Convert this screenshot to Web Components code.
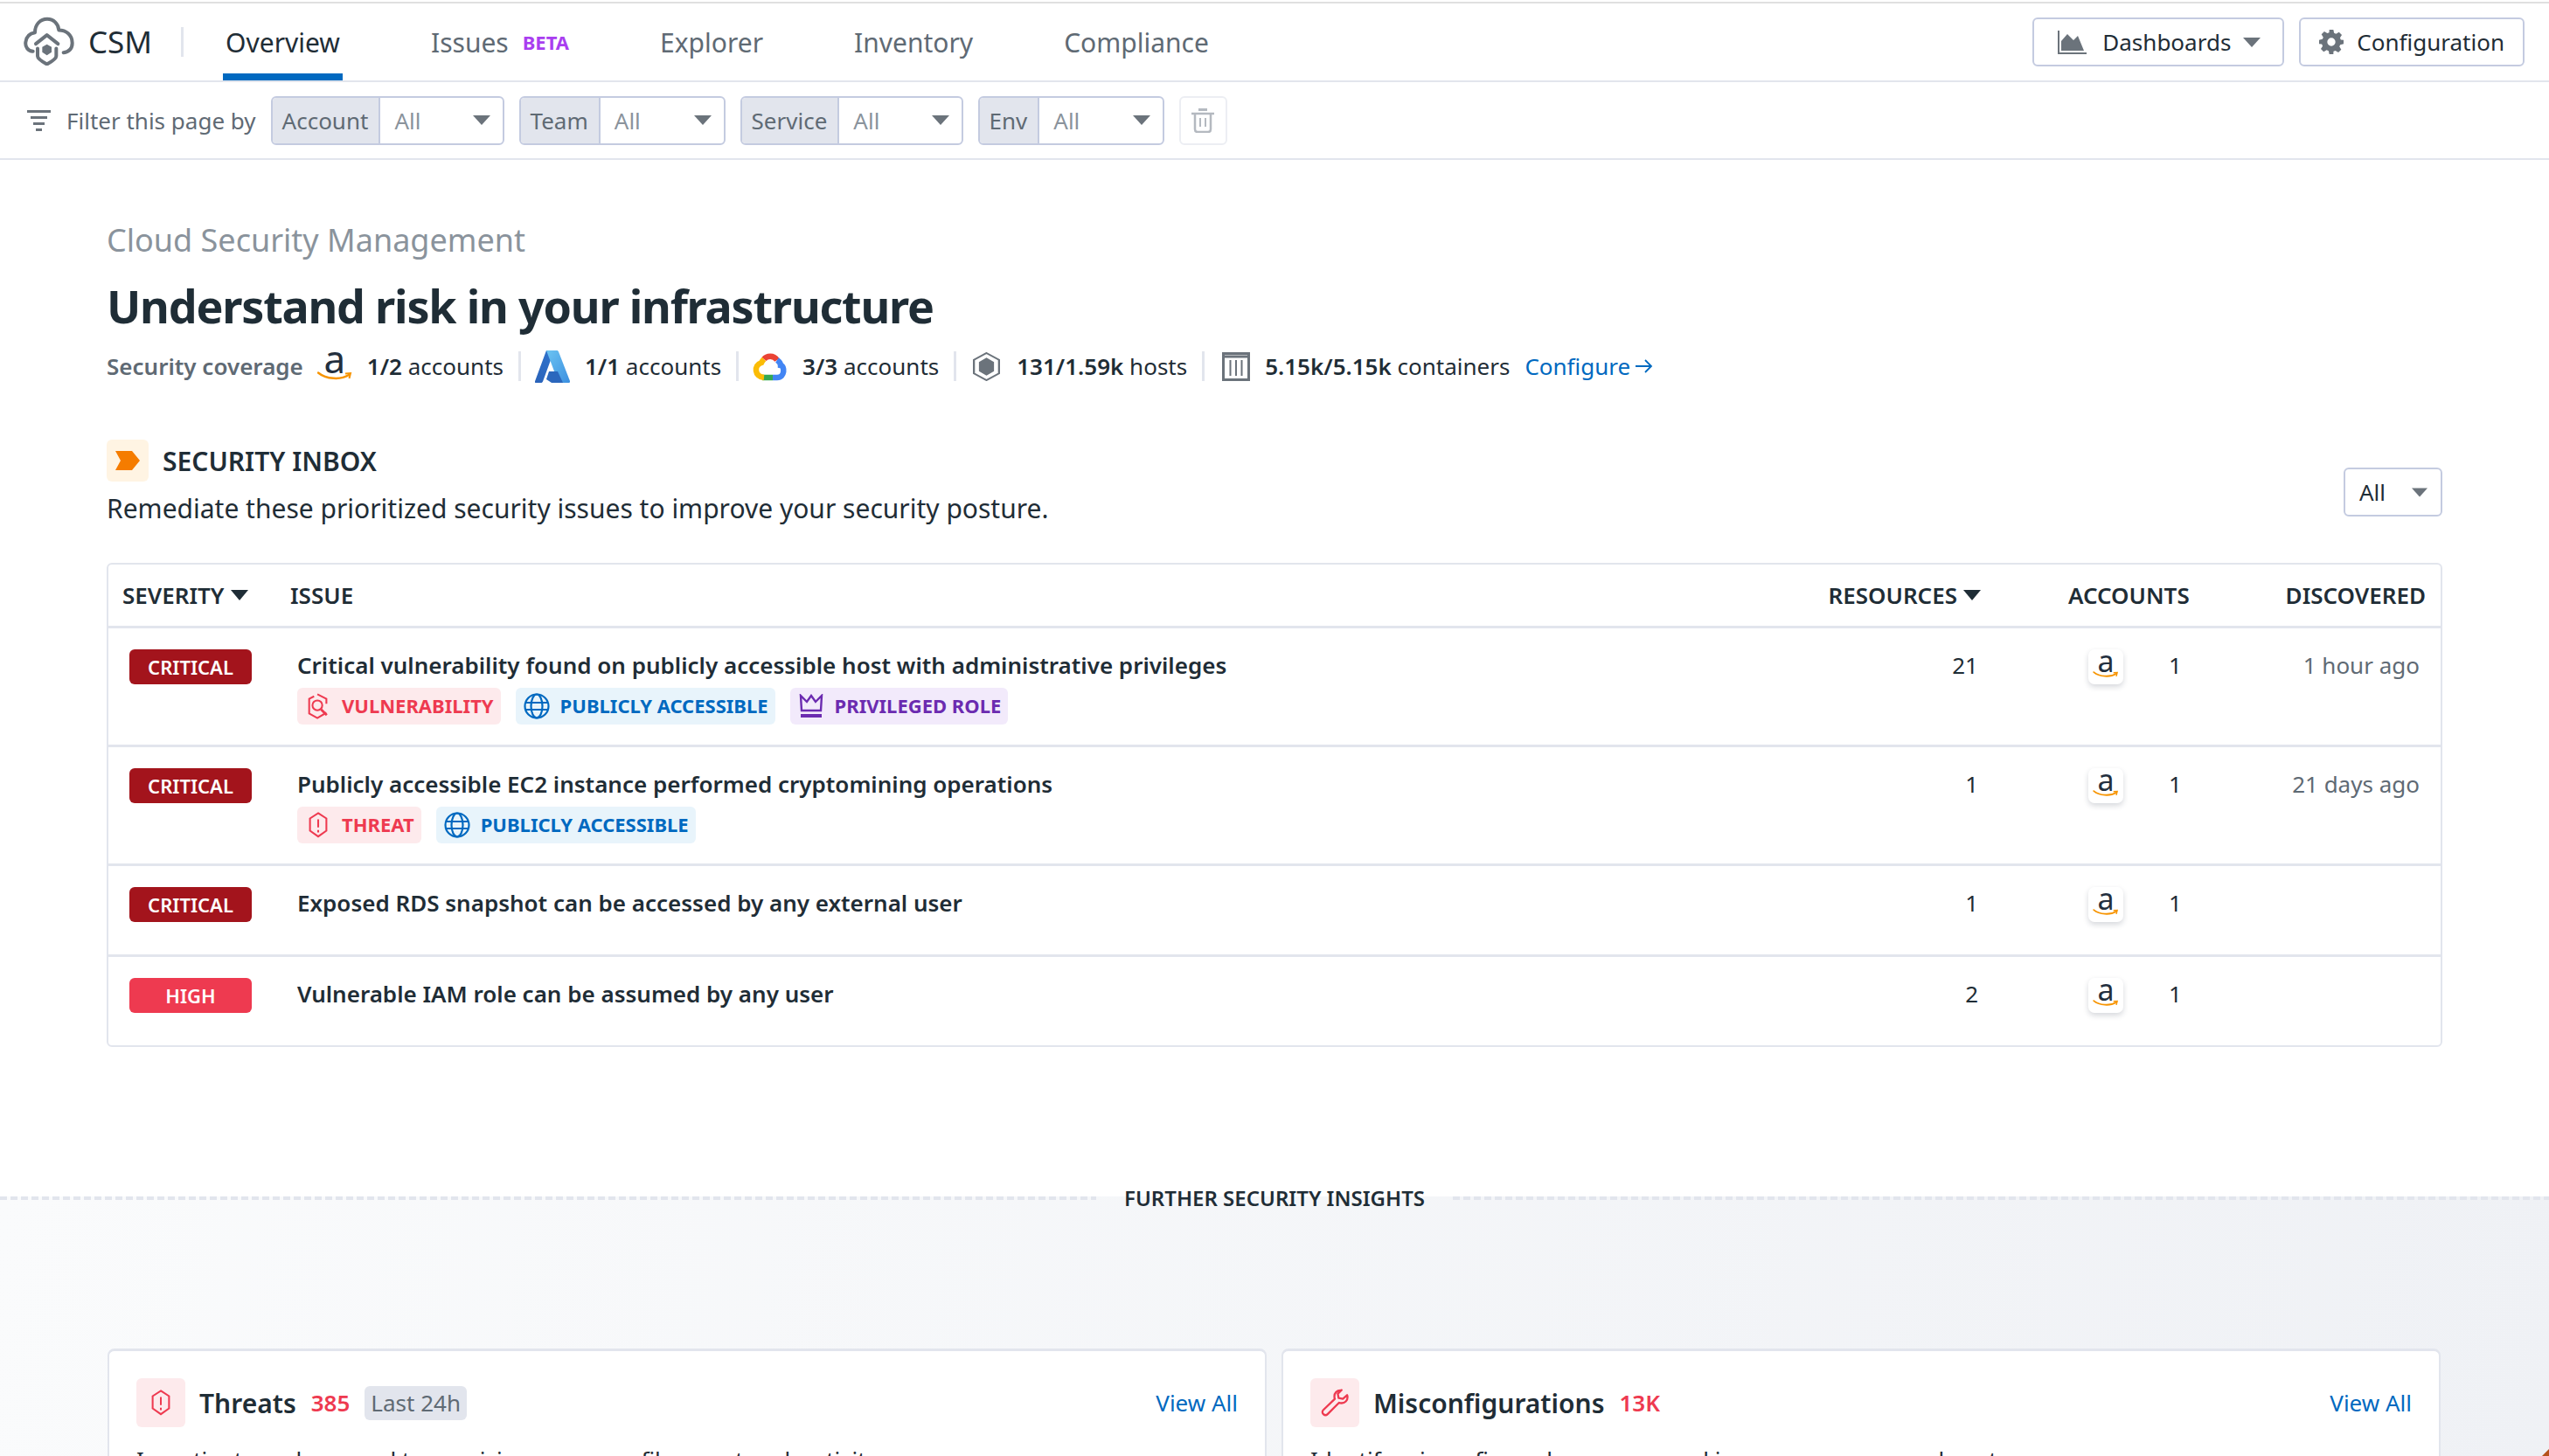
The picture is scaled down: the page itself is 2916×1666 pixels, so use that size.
<!DOCTYPE html>
<html>
<head>
<meta charset="utf-8">
<title>CSM Overview</title>
<style>
  html, body { margin: 0; height: 100%; overflow: hidden; background: #fff; }
  body { font-family: "Noto Sans", sans-serif; color: #1f2d36; }
</style>
</head>
<body>
<csm-app></csm-app>

<script>
// icons are shared between the elements
const ICONS = {
  logo: `<svg width="60" height="57" viewBox="20 10 180 170" fill="none" stroke="#6b737b" stroke-width="12" stroke-linejoin="round" stroke-linecap="round"><path d="M52 132C34 130 25 116 27 100c2-18 14-30 32-33 0-28 18-46 42-46 22 0 38 16 40 38 24 0 46 16 46 44 0 18-10 30-30 33"/><path d="M62 106l38-30 38 30"/><path d="M68 122v26c0 8 18 20 32 28 14-8 32-20 32-28v-26"/><path d="M100 108l16 9v18l-16 10-16-10v-18z" fill="#6b737b" stroke="none"/></svg>`,
  filter: `<svg width="28" height="24" viewBox="0 0 28 24" fill="#6b737b"><rect x="0" y="0" width="27" height="3"/><rect x="4" y="7" width="19" height="3"/><rect x="7" y="14" width="13" height="3"/><rect x="10" y="21" width="7" height="3"/></svg>`,
  caret: `<svg width="20" height="11" viewBox="0 0 20 11" fill="#6b737b"><path d="M0 0h20L10 11z"/></svg>`,
  caretDark: `<svg width="20" height="12" viewBox="0 0 20 12" fill="#1f2d36"><path d="M0 0h20L10 12z"/></svg>`,
  trash: `<svg width="26" height="28" viewBox="0 0 26 28" fill="none" stroke="#b4b9c0" stroke-width="2.500"><path d="M0 6h26"/><path d="M8 1.500h10" stroke-width="3"/><path d="M4 6v18c0 2 1 3 3 3h12c2 0 3-1 3-3V6"/><path d="M10 11v10M16 11v10" stroke-width="2"/></svg>`,
  chart: `<svg width="33" height="27" viewBox="0 0 33 27" fill="#6b737b"><rect x="0" y="0" width="2" height="27"/><rect x="0" y="25" width="33" height="2"/><path d="M4 23V12l7-8 7 7 5-5 7 17z"/></svg>`,
  gear: `<svg width="28" height="28" viewBox="0 0 24 24" fill="#6b737b"><path fill-rule="evenodd" d="M10 0h4l.7 3.300 1.900.8 2.900-1.800 2.800 2.800-1.800 2.900.8 1.900L24 10v4l-3.300.7-.8 1.900 1.800 2.900-2.800 2.800-2.900-1.800-1.900.8L14 24h-4l-.7-3.300-1.900-.8-2.900 1.800-2.800-2.800 1.800-2.900-.8-1.900L0 14v-4l3.300-.7.8-1.900-1.800-2.900 2.800-2.800 2.900 1.800 1.900-.8zM12 8a4 4 0 1 0 0 8 4 4 0 0 0 0-8z"/></svg>`,
  // amazon "a" is a real letter, only the smile is drawn
  smile: `<svg width="40" height="11" viewBox="0 0 40 11" fill="none"><path d="M1 1.500C10 9 27 10 36 4" stroke="#f79400" stroke-width="2.500" stroke-linecap="round"/><path d="M32 2.500l6-.5-1.500 6" stroke="#f79400" stroke-width="2" fill="none"/></svg>`,
  azure: `<svg width="40" height="37" viewBox="0 0 40 37"><defs><linearGradient id="az1" x1="0" y1="1" x2="1" y2="0"><stop offset="0" stop-color="#2a62b8"/><stop offset="1" stop-color="#2f74cf"/></linearGradient><linearGradient id="az2" x1="0" y1="0" x2="1" y2="1"><stop offset="0" stop-color="#6cc4f2"/><stop offset="1" stop-color="#3b8fe0"/></linearGradient></defs><path d="M13 0h9L9 35.500c-.300.900-1 1.500-2 1.500H1c-1 0-1.300-.8-1-1.700z" fill="url(#az1)"/><path d="M13 0h12c1 0 1.600.6 2 1.500L40 35c.300 1-.300 2-1.500 2H27z" fill="url(#az2)"/><path d="M16 24h10l6 13H19l-6-4z" fill="#2b67bd"/></svg>`,
  gcp: `<svg width="40" height="33" viewBox="0 0 40 33" fill="none" stroke-width="6.500"><path d="M13 8C16 4 24 3 28 9" stroke="#ea4335"/><path d="M28 9c3 2 4 4 4 6 5 1 5 14-4 14h-5" stroke="#4285f4"/><path d="M23 29H11" stroke="#34a853"/><path d="M13 29C2 28 1 15 10 12c1-2 2-3 3-4" stroke="#fbbc05"/></svg>`,
  host: `<svg width="31" height="33" viewBox="0 0 27 34" preserveAspectRatio="none"><path d="M13.500 1L26 9v16l-12.500 8L1 25V9z" fill="none" stroke="#6b737b" stroke-width="2"/><path d="M13.500 6.500L21 11.500v11l-7.500 5-7.500-5v-11z" fill="#6b737b"/></svg>`,
  container: `<svg width="32" height="33" viewBox="0 0 32 33" fill="none" stroke="#6b737b"><rect x="1.500" y="1.500" width="29" height="30" stroke-width="3"/><path d="M1 5h30" stroke-width="3"/><path d="M9.500 9v18M16 9v18M22.500 9v18" stroke-width="2"/></svg>`,
  inbox: `<svg width="28" height="22" viewBox="0 0 28 22" fill="#f57c00"><path d="M0 0h19l9 11-9 11H0l6-11z"/></svg>`,
  vuln: `<svg width="26" height="30" viewBox="0 0 26 32" fill="none" stroke="#ee3a50" stroke-width="2.200"><path d="M12 1.500L23 7v6M23 24l-11 6.500L2 25V7l6-3"/><circle cx="12" cy="15" r="6"/><path d="M16.500 20l7 7" stroke-width="3"/></svg>`,
  threat: `<svg width="24" height="30" viewBox="0 0 24 32" fill="none" stroke="#ee3a50" stroke-width="2.200"><path d="M12 1.500l10 6.500v15l-10 7-10-7V8z"/><path d="M12 9v10M12 22v3"/></svg>`,
  globe: `<svg width="30" height="30" viewBox="0 0 30 30" fill="none" stroke="#0069c0" stroke-width="2.200"><circle cx="15" cy="15" r="13.500"/><ellipse cx="15" cy="15" rx="6.500" ry="13.500"/><path d="M2 11h26M2 19h26"/></svg>`,
  crown: `<svg width="30" height="28" viewBox="0 0 30 28" fill="none" stroke="#6b2bb0" stroke-width="2.400"><path d="M3 2l1 17h22l1-17-7 7-5-7-5 7z"/><path d="M3 25h24" stroke-width="4"/></svg>`,
  wrench: `<svg width="32" height="32" viewBox="0 0 33 33" fill="none" stroke="#ee3a50" stroke-width="2.400" stroke-linejoin="round"><path d="M23 2c-4 0-7 3-7 7 0 1 0 2 .5 3L3 25c-1.500 1.500-1.500 3.500 0 5s3.500 1.500 5 0l13.500-13.500c1 .5 2 .5 3 .5 4 0 7-3 7-7 0-1 0-2-.5-2.500L26 12l-5-1-1-5 4.500-4.500C24 2 23.500 2 23 2z"/></svg>`,
  arrow: `<svg width="20" height="18" viewBox="0 0 20 18" fill="none" stroke="#0069c0" stroke-width="1.800"><path d="M0 9h18M11 2l7 7-7 7"/></svg>`
};

class NavTab extends HTMLElement {
  constructor() {
    super();
    this.attachShadow({ mode: "open" });
    this.shadowRoot.innerHTML = `
      <style>
        :host { display: flex; align-items: center; height: 88px; padding: 0 3px; margin-right: 98px; font-size: 30px; color: #5f6a74; box-sizing: border-box; }
        :host([active]) { color: #1f2d36; box-shadow: inset 0 -8px 0 #0069c0; }
        .beta { font-size: 22px; font-weight: 700; color: #a93ef0; margin-left: 16px; }
      </style>
      <slot></slot>${this.hasAttribute("beta") ? '<span class="beta">BETA</span>' : ""}`;
  }
}

class NavButton extends HTMLElement {
  constructor() {
    super();
    this.attachShadow({ mode: "open" });
    const icon = ICONS[this.getAttribute("icon")] || "";
    const caret = this.hasAttribute("caret");
    this.shadowRoot.innerHTML = `
      <style>
        :host { display: inline-flex; align-items: center; height: 56px; box-sizing: border-box; border: 2px solid #c4cbe0; border-radius: 6px; font-size: 26px; color: #1f2d36; background: #fff; }
        .in { display: flex; align-items: center; padding: 0 ${caret ? 20 : 21}px 0 ${caret ? 27 : 21}px; }
        .ic { display: flex; margin-right: ${caret ? 18 : 15}px; }
        .ca { display: ${caret ? "flex" : "none"}; margin-left: 14px; margin-right: 5px; }
      </style>
      <div class="in"><span class="ic">${icon}</span><slot></slot><span class="ca">${ICONS.caret}</span></div>`;
  }
}

class FilterSelect extends HTMLElement {
  constructor() {
    super();
    this.attachShadow({ mode: "open" });
    this.shadowRoot.innerHTML = `
      <style>
        :host { display: flex; height: 56px; box-sizing: border-box; border: 2px solid #c4cbe0; border-radius: 6px; font-size: 26px; color: #5f6a74; overflow: hidden; background: #fff; }
        .label { display: flex; align-items: center; padding: 0 12px 0 11px; background: #e2e5ed; border-right: 2px solid #c4cbe0; }
        .value { display: flex; align-items: center; flex: 1; padding: 0 14px 0 16px; color: #8a939c; justify-content: space-between; }
      </style>
      <div class="label"><slot></slot></div>
      <div class="value"><span>All</span>${ICONS.caret}</div>`;
  }
}

class SubHeader extends HTMLElement {
  constructor() {
    super();
    this.attachShadow({ mode: "open" });
    this.shadowRoot.innerHTML = `
      <style>
        :host { display: flex; align-items: center; height: 89px; padding: 0 0 0 31px; border-bottom: 2px solid #e2e5ed; font-size: 26px; color: #5f6a74; box-sizing: border-box; }
        .t { margin: 0 17px 0 17px; }
        filter-select { margin-right: 17px; }
        filter-select.account { width: 267px; } filter-select.team { width: 236px; }
        filter-select.service { width: 255px; } filter-select.env { width: 213px; }
        .trash { width: 55px; height: 56px; box-sizing: border-box; border: 2px solid #eceef3; border-radius: 6px; display: flex; align-items: center; justify-content: center; }
      </style>
      ${ICONS.filter}<span class="t">Filter this page by</span>
      <filter-select class="account">Account</filter-select>
      <filter-select class="team">Team</filter-select>
      <filter-select class="service">Service</filter-select>
      <filter-select class="env">Env</filter-select>
      <div class="trash">${ICONS.trash}</div>`;
  }
}

class TopNav extends HTMLElement {
  constructor() {
    super();
    this.attachShadow({ mode: "open" });
    this.shadowRoot.innerHTML = `
      <style>
        :host { display: flex; align-items: flex-start; box-sizing: border-box; border-top: 2px solid #e0e0e0; margin-top: 2px; border-bottom: 2px solid #e2e5ed; height: 92px; padding: 0 28px 0 27px; }
        .logo { display: flex; margin-top: 14px; }
        .csm { font-size: 35px; margin: 21px 33px 0 14px; line-height: 46px; }
        .sep { width: 3px; height: 34px; background: #e2e5ed; margin: 27px 45px 0 0; }
        .right { margin-left: auto; display: flex; gap: 17px; margin-top: 16px; }
      </style>
      <div class="logo">${ICONS.logo}</div>
      <div class="csm">CSM</div>
      <div class="sep"></div>
      <nav-tab active>Overview</nav-tab>
      <nav-tab beta>Issues</nav-tab>
      <nav-tab>Explorer</nav-tab>
      <nav-tab>Inventory</nav-tab>
      <nav-tab>Compliance</nav-tab>
      <div class="right">
        <nav-button icon="chart" caret>Dashboards</nav-button>
        <nav-button icon="gear">Configuration</nav-button>
      </div>`;
  }
}

class AmazonMark extends HTMLElement {
  constructor() {
    super();
    this.attachShadow({ mode: "open" });
    const chip = this.hasAttribute("chip");
    this.shadowRoot.innerHTML = `
      <style>
        :host { display: inline-flex; flex-direction: column; align-items: center; justify-content: center; box-sizing: border-box; width: 40px; height: 40px; }
        :host([chip]) { background: #fff; border-radius: 7px; box-shadow: 0 3px 6px rgba(30,40,60,.18); }
        .a { font-family: "Noto Sans", sans-serif; font-size: ${chip ? 34 : 44}px; line-height: ${chip ? 26 : 32}px; color: #232f3e; margin-top: -8px; }
        svg { width: ${chip ? 30 : 40}px; height: ${chip ? 8 : 11}px; margin-top: -1px; }
      </style>
      <span class="a">a</span>${ICONS.smile}`;
  }
}

class CoverageBar extends HTMLElement {
  constructor() {
    super();
    this.attachShadow({ mode: "open" });
    const item = (icon, b, rest, cls = "") => `<span class="item ${cls}">${icon}<span class="txt"><b>${b}</b> ${rest}</span></span>`;
    this.shadowRoot.innerHTML = `
      <style>
        :host { display: flex; align-items: center; height: 40px; font-size: 26px; color: #1f2d36; }
        .lab { font-weight: 600; color: #5f6a74; margin-right: 16px; }
        .item { display: flex; align-items: center; }
        .item svg, .item amazon-mark { flex: none; }
        .txt { margin-left: 17px; }
        .hosts .txt { margin-left: 19px; }
        b { font-weight: 600; }
        .sep { width: 3px; height: 34px; background: #e2e5ed; margin: 0 16px 0 17px; }
        .sep.w3 { margin-right: 19px; }
        .sep.w4 { margin-right: 20px; }
        .cfg { color: #0069c0; margin-left: 17px; display: flex; align-items: center; gap: 6px; }
      </style>
      <span class="lab">Security coverage</span>
      ${item("<amazon-mark></amazon-mark>", "1/2", "accounts")}<span class="sep"></span>
      ${item(ICONS.azure, "1/1", "accounts")}<span class="sep"></span>
      ${item(ICONS.gcp, "3/3", "accounts")}<span class="sep w3"></span>
      ${item(ICONS.host, "131/1.59k", "hosts", "hosts")}<span class="sep w4"></span>
      ${item(ICONS.container, "5.15k/5.15k", "containers")}
      <span class="cfg">Configure ${ICONS.arrow}</span>`;
  }
}

class SevBadge extends HTMLElement {
  constructor() {
    super();
    this.attachShadow({ mode: "open" });
    this.shadowRoot.innerHTML = `
      <style>
        :host { display: flex; align-items: center; justify-content: center; width: 140px; height: 40px; border-radius: 6px; background: #a3141c; color: #fff; font-size: 22px; font-weight: 600; }
        :host([level="high"]) { background: #ee3a50; }
      </style>
      <slot></slot>`;
  }
}

class IssueTag extends HTMLElement {
  constructor() {
    super();
    this.attachShadow({ mode: "open" });
    this.shadowRoot.innerHTML = `
      <style>
        :host { display: inline-flex; align-items: center; gap: 12px; height: 42px; padding: 0 8px 2px 9px; border-radius: 6px; font-size: 22px; font-weight: 700; box-sizing: border-box; }
        :host([kind="red"]) { background: #fdeaec; color: #ee3a50; }
        :host([kind="blue"]) { background: #e8f4fb; color: #0069c0; }
        :host([kind="purple"]) { background: #f2eafb; color: #6b2bb0; }
        span { display: flex; width: 30px; justify-content: center; margin-bottom: -2px; }
      </style>
      <span>${ICONS[this.getAttribute("icon")]}</span><slot></slot>`;
  }
}

const COLS = "grid-template-columns: 208px 1fr 200px 300px 226px;";

class IssueRow extends HTMLElement {
  constructor() {
    super();
    this.attachShadow({ mode: "open" });
    const found = this.getAttribute("found") || "";
    this.shadowRoot.innerHTML = `
      <style>
        :host { display: grid; ${COLS} border-top: 3px solid #e2e5ed; box-sizing: border-box; padding: 24px 0 0; font-size: 26px; }
        .sev { padding-left: 24px; }
        .issue { font-weight: 600; line-height: 37px; padding-left: 8px; min-height: 77px; }
        .tags { display: none; gap: 17px; margin-top: 7px; padding-bottom: 23px; }
        :host([tagged]) .tags { display: flex; }
        .res { text-align: right; line-height: 37px; padding-right: 3px; }
        .acc { display: flex; align-items: flex-start; padding-left: 123px; }
        .acc span { line-height: 37px; margin-left: 52px; }
        .when { text-align: right; line-height: 37px; color: #5f6a74; padding-right: 24px; }
      </style>
      <div class="sev"><slot name="badge"></slot></div>
      <div class="issue">${this.getAttribute("title")}<div class="tags"><slot name="tags"></slot></div></div>
      <div class="res">${this.getAttribute("resources")}</div>
      <div class="acc"><amazon-mark chip></amazon-mark><span>1</span></div>
      <div class="when">${found}</div>`;
  }
}

class IssueTable extends HTMLElement {
  constructor() {
    super();
    this.attachShadow({ mode: "open" });
    this.shadowRoot.innerHTML = `
      <style>
        :host { display: block; border: 2px solid #e2e5ed; border-radius: 6px; box-sizing: border-box; }
        .head { display: grid; ${COLS} align-items: center; height: 70px; font-size: 26px; font-weight: 600; }
        .head > div { display: flex; align-items: center; gap: 7px; }
        .s { padding-left: 16px; }
        .r { justify-content: flex-end; }
        .a { padding-left: 100px; }
        .d { justify-content: flex-end; padding-right: 17px; }
      </style>
      <div class="head">
        <div class="s">SEVERITY ${ICONS.caretDark}</div>
        <div>ISSUE</div>
        <div class="r">RESOURCES ${ICONS.caretDark}</div>
        <div class="a">ACCOUNTS</div>
        <div class="d">DISCOVERED</div>
      </div>
      <slot></slot>`;
  }
}

class SecurityInbox extends HTMLElement {
  constructor() {
    super();
    this.attachShadow({ mode: "open" });
    this.shadowRoot.innerHTML = `
      <style>
        :host { display: block; }
        .top { display: flex; align-items: flex-end; justify-content: space-between; margin-bottom: 40px; }
        .title { display: flex; align-items: center; gap: 16px; font-size: 30px; font-weight: 600; }
        .box { width: 48px; height: 48px; border-radius: 6px; background: #fff4e3; display: flex; align-items: center; justify-content: center; }
        .desc { font-size: 30px; margin-top: 9px; line-height: 44px; }
        .sel { display: flex; align-items: center; justify-content: space-between; width: 113px; height: 56px; box-sizing: border-box; border: 2px solid #c4cbe0; border-radius: 6px; padding: 0 15px 0 16px; font-size: 26px; margin-bottom: 13px; }
        .sel svg { width: 18px; }
      </style>
      <div class="top">
        <div>
          <div class="title"><span class="box">${ICONS.inbox}</span>SECURITY INBOX</div>
          <div class="desc">Remediate these prioritized security issues to improve your security posture.</div>
        </div>
        <div class="sel">All ${ICONS.caret}</div>
      </div>
      <slot></slot>`;
  }
}

class InsightCard extends HTMLElement {
  constructor() {
    super();
    this.attachShadow({ mode: "open" });
    const chip = this.getAttribute("chip");
    this.shadowRoot.innerHTML = `
      <style>
        :host { display: block; background: #fff; border: 2px solid #e2e5ed; border-top-width: 3px; border-radius: 8px 8px 0 0; padding: 31px 31px 0 31px; box-sizing: border-box; height: 200px; overflow: hidden; }
        .row { display: flex; align-items: center; height: 56px; }
        .ic { width: 56px; height: 56px; border-radius: 6px; background: #fdeaec; display: flex; align-items: center; justify-content: center; margin-right: 16px; }
        .n { font-size: 30px; font-weight: 600; }
        .c { font-size: 26px; font-weight: 600; color: #ee3a50; margin-left: 17px; }
        .chip { font-size: 26px; background: #e2e5ed; color: #5f6a74; border-radius: 6px; height: 39px; padding: 0 7px; display: flex; align-items: center; margin-left: 17px; }
        .va { margin-left: auto; font-size: 26px; color: #0069c0; }
        p { margin: 19px 0 0; font-size: 26px; line-height: 36px; }
      </style>
      <div class="row">
        <span class="ic">${ICONS[this.getAttribute("icon")]}</span>
        <span class="n">${this.getAttribute("name")}</span>
        <span class="c">${this.getAttribute("count")}</span>
        ${chip ? `<span class="chip">${chip}</span>` : ""}
        <span class="va">View All</span>
      </div>
      <p><slot></slot></p>`;
  }
}

class FurtherInsights extends HTMLElement {
  constructor() {
    super();
    this.attachShadow({ mode: "open" });
    this.shadowRoot.innerHTML = `
      <style>
        :host { display: block; background: linear-gradient(100deg, #fafbfc 0%, #eff1f5 100%); height: 297px; }
        .rule { display: flex; align-items: center; height: 4px; gap: 32px; }
        .dash { flex: 1; height: 4px; background: repeating-linear-gradient(90deg, #e2e5ed 0 8px, transparent 8px 12px); }
        .lab { font-size: 24px; font-weight: 600; line-height: 32px; }
        .cards { display: grid; grid-template-columns: 1fr 1fr; gap: 17px; padding: 170px 124px 0 123px; }
      </style>
      <div class="rule"><span class="dash"></span><span class="lab">FURTHER SECURITY INSIGHTS</span><span class="dash"></span></div>
      <div class="cards"><slot></slot></div>`;
  }
}

class CsmApp extends HTMLElement {
  constructor() {
    super();
    this.attachShadow({ mode: "open" });
    this.shadowRoot.innerHTML = `
      <style>
        :host { display: block; font-family: "Noto Sans", sans-serif; color: #1f2d36; height: 1666px; overflow: hidden; }
        .page { padding: 68px 122px 0 122px; height: 1186px; box-sizing: border-box; }
        .crumb { font-size: 36px; color: #8a939c; line-height: 48px; }
        h1 { font-size: 52px; font-weight: 700; letter-spacing: -1.2px; margin: 18px 0 0; line-height: 66px; }
        coverage-bar { margin-top: 16px; margin-bottom: 64px; }
        .corner { position: fixed; right: 0; bottom: 0; width: 8px; height: 8px; background: #b5521b; clip-path: polygon(100% 0, 100% 100%, 0 100%); }
      </style>
      <top-nav></top-nav>
      <sub-header></sub-header>
      <div class="page">
        <div class="crumb">Cloud Security Management</div>
        <h1>Understand risk in your infrastructure</h1>
        <coverage-bar></coverage-bar>
        <security-inbox>
          <issue-table>
            <issue-row tagged title="Critical vulnerability found on publicly accessible host with administrative privileges" resources="21" found="1 hour ago">
              <sev-badge slot="badge">CRITICAL</sev-badge>
              <issue-tag slot="tags" kind="red" icon="vuln">VULNERABILITY</issue-tag>
              <issue-tag slot="tags" kind="blue" icon="globe">PUBLICLY ACCESSIBLE</issue-tag>
              <issue-tag slot="tags" kind="purple" icon="crown">PRIVILEGED ROLE</issue-tag>
            </issue-row>
            <issue-row tagged title="Publicly accessible EC2 instance performed cryptomining operations" resources="1" found="21 days ago">
              <sev-badge slot="badge">CRITICAL</sev-badge>
              <issue-tag slot="tags" kind="red" icon="threat">THREAT</issue-tag>
              <issue-tag slot="tags" kind="blue" icon="globe">PUBLICLY ACCESSIBLE</issue-tag>
            </issue-row>
            <issue-row title="Exposed RDS snapshot can be accessed by any external user" resources="1">
              <sev-badge slot="badge">CRITICAL</sev-badge>
            </issue-row>
            <issue-row title="Vulnerable IAM role can be assumed by any user" resources="2">
              <sev-badge slot="badge" level="high">HIGH</sev-badge>
            </issue-row>
          </issue-table>
        </security-inbox>
      </div>
      <further-insights>
        <insight-card icon="threat" name="Threats" count="385" chip="Last 24h">Investigate and respond to suspicious process, file or network activity</insight-card>
        <insight-card icon="wrench" name="Misconfigurations" count="13K">Identify misconfigured resources and improve your general posture score</insight-card>
      </further-insights>
      <div class="corner"></div>`;
  }
}

customElements.define("amazon-mark", AmazonMark);
customElements.define("nav-tab", NavTab);
customElements.define("nav-button", NavButton);
customElements.define("filter-select", FilterSelect);
customElements.define("sub-header", SubHeader);
customElements.define("top-nav", TopNav);
customElements.define("coverage-bar", CoverageBar);
customElements.define("sev-badge", SevBadge);
customElements.define("issue-tag", IssueTag);
customElements.define("issue-row", IssueRow);
customElements.define("issue-table", IssueTable);
customElements.define("security-inbox", SecurityInbox);
customElements.define("insight-card", InsightCard);
customElements.define("further-insights", FurtherInsights);
customElements.define("csm-app", CsmApp);
</script>
</body>
</html>
